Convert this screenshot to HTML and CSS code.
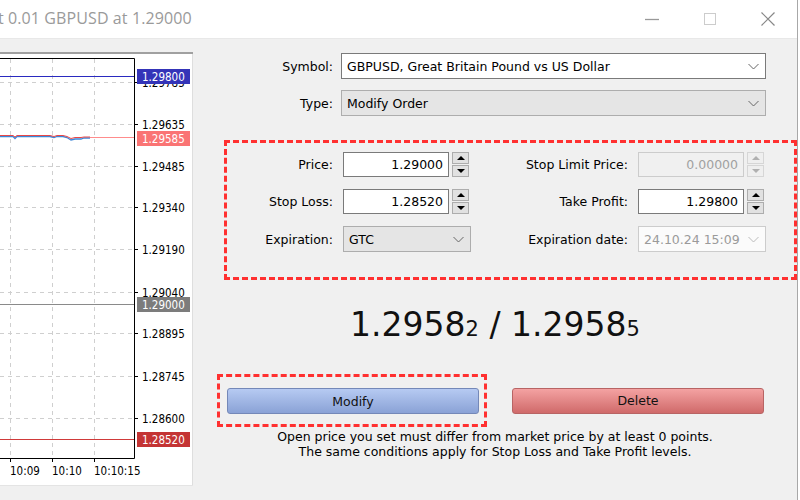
FILE: index.html
```html
<!DOCTYPE html>
<html lang="en">
<head>
    <meta charset="UTF-8">
    <title>Modify order</title>
    <link rel="stylesheet" href="styles.css">
</head>
<body>

<div class="window">
    <div class="titlebar">
        <span class="title">t 0.01 GBPUSD at 1.29000</span>
        <div class="win-btn">
            <svg width="16" height="16" viewBox="0 0 16 16"><line x1="1" y1="8.5" x2="15" y2="8.5" stroke="#999" stroke-width="1.3"/></svg>
        </div>
        <div class="win-btn">
            <svg width="16" height="16" viewBox="0 0 16 16"><rect x="2.5" y="2.5" width="11" height="11" fill="none" stroke="#ccc"/></svg>
        </div>
        <div class="win-btn">
            <svg width="16" height="16" viewBox="0 0 16 16"><path d="M1.5 1.5 L14.5 14.5 M14.5 1.5 L1.5 14.5" stroke="#888" stroke-width="1.2"/></svg>
        </div>
    </div>

    <div class="main">
        <!-- small chart on the left, drawn in page coordinates -->
        <div class="chart">
            <svg width="193" height="434" viewBox="0 52 193 434">
                <rect x="0" y="52" width="193" height="434" fill="#fff"/>
                <rect x="0" y="52" width="193" height="2" fill="#a0a0a0"/>
                <line x1="192.5" y1="54" x2="192.5" y2="486" stroke="#dedede"/>
                <line x1="0" y1="485.5" x2="193" y2="485.5" stroke="#e4e4e4"/>

                <g stroke="#cfcfcf" stroke-dasharray="4 4">
                    <line x1="0" y1="82.5" x2="134" y2="82.5"/>
                    <line x1="0" y1="124.5" x2="134" y2="124.5"/>
                    <line x1="0" y1="166.5" x2="134" y2="166.5"/>
                    <line x1="0" y1="207.5" x2="134" y2="207.5"/>
                    <line x1="0" y1="249.5" x2="134" y2="249.5"/>
                    <line x1="0" y1="292.5" x2="134" y2="292.5"/>
                    <line x1="0" y1="333.5" x2="134" y2="333.5"/>
                    <line x1="0" y1="376.5" x2="134" y2="376.5"/>
                    <line x1="0" y1="418.5" x2="134" y2="418.5"/>
                    <line x1="10.5" y1="59" x2="10.5" y2="458"/>
                    <line x1="52.5" y1="59" x2="52.5" y2="458"/>
                    <line x1="94.5" y1="59" x2="94.5" y2="458"/>
                </g>

                <path d="M0 58.5 H134.5 V458.5 H0" fill="none" stroke="#000"/>
                <g stroke="#000">
                    <line x1="134" y1="82.5" x2="138" y2="82.5"/>
                    <line x1="134" y1="124.5" x2="138" y2="124.5"/>
                    <line x1="134" y1="166.5" x2="138" y2="166.5"/>
                    <line x1="134" y1="207.5" x2="138" y2="207.5"/>
                    <line x1="134" y1="249.5" x2="138" y2="249.5"/>
                    <line x1="134" y1="292.5" x2="138" y2="292.5"/>
                    <line x1="134" y1="333.5" x2="138" y2="333.5"/>
                    <line x1="134" y1="376.5" x2="138" y2="376.5"/>
                    <line x1="134" y1="418.5" x2="138" y2="418.5"/>
                    <line x1="10.5" y1="458" x2="10.5" y2="462"/>
                    <line x1="52.5" y1="458" x2="52.5" y2="462"/>
                    <line x1="94.5" y1="458" x2="94.5" y2="462"/>
                </g>

                <g class="axis">
                    <text x="142" y="87">1.29785</text>
                    <text x="142" y="129">1.29635</text>
                    <text x="142" y="171">1.29485</text>
                    <text x="142" y="212">1.29340</text>
                    <text x="142" y="254">1.29190</text>
                    <text x="142" y="297">1.29040</text>
                    <text x="142" y="338">1.28895</text>
                    <text x="142" y="381">1.28745</text>
                    <text x="142" y="423">1.28600</text>
                    <text x="10" y="475">10:09</text>
                    <text x="52" y="475">10:10</text>
                    <text x="94" y="475">10:10:15</text>
                </g>

                <!-- take profit -->
                <line x1="0" y1="76.5" x2="134" y2="76.5" stroke="#2a2ac0"/>
                <rect x="137" y="69" width="53" height="15" fill="#3434b8"/>
                <!-- current price -->
                <line x1="90" y1="137.5" x2="134" y2="137.5" stroke="#ff8c8c"/>
                <polyline points="0,136.5 13,136.5 15,138.5 17,136.5 50,136.5 54,137.5 57,136.5 63,136.5 67,137.5 71,140 75,139 81,139 84,138 90,138" fill="none" stroke="#3c86d8" stroke-width="1.3"/>
                <polyline points="0,135.5 13,135.5 15,137 17,135.5 50,135.5 54,136.5 57,135.5 63,135.5 67,136.5 71,138.5 75,137.5 81,137.5 84,137 90,137" fill="none" stroke="#e84848" stroke-width="1"/>
                <rect x="137" y="131" width="53" height="15" fill="#fa7474"/>
                <!-- order price -->
                <line x1="0" y1="304.5" x2="134" y2="304.5" stroke="#8a8a8a"/>
                <rect x="137" y="297" width="53" height="15" fill="#7c7c7c"/>
                <!-- stop loss -->
                <line x1="0" y1="439.5" x2="134" y2="439.5" stroke="#d03a3a"/>
                <rect x="137" y="432" width="53" height="15" fill="#c43434"/>

                <g class="axis tag">
                    <text x="142" y="81">1.29800</text>
                    <text x="142" y="143">1.29585</text>
                    <text x="142" y="309">1.29000</text>
                    <text x="142" y="444">1.28520</text>
                </g>
            </svg>
        </div>

        <div class="dialog">
            <div class="row">
                <label>Symbol:</label>
                <div class="select white">
                    <span>GBPUSD, Great Britain Pound vs US Dollar</span>
                    <svg class="chev" width="11" height="7" viewBox="0 0 11 7"><polyline points="0.5,1 5.5,6 10.5,1" fill="none" stroke="#666"/></svg>
                </div>
            </div>
            <div class="row">
                <label>Type:</label>
                <div class="select">
                    <span>Modify Order</span>
                    <svg class="chev" width="11" height="7" viewBox="0 0 11 7"><polyline points="0.5,1 5.5,6 10.5,1" fill="none" stroke="#666"/></svg>
                </div>
            </div>

            <div class="params">
                <label>Price:</label>
                <div class="num">
                    <input type="text" value="1.29000">
                    <div class="spin"><span class="up"></span><span class="down"></span></div>
                </div>
                <label>Stop Limit Price:</label>
                <div class="num off">
                    <input type="text" value="0.00000" disabled>
                    <div class="spin"><span class="up"></span><span class="down"></span></div>
                </div>

                <label>Stop Loss:</label>
                <div class="num">
                    <input type="text" value="1.28520">
                    <div class="spin"><span class="up"></span><span class="down"></span></div>
                </div>
                <label>Take Profit:</label>
                <div class="num">
                    <input type="text" value="1.29800">
                    <div class="spin"><span class="up"></span><span class="down"></span></div>
                </div>

                <label>Expiration:</label>
                <div class="select">
                    <span>GTC</span>
                    <svg class="chev" width="11" height="7" viewBox="0 0 11 7"><polyline points="0.5,1 5.5,6 10.5,1" fill="none" stroke="#666"/></svg>
                </div>
                <label>Expiration date:</label>
                <div class="select disabled">
                    <span>24.10.24 15:09</span>
                    <svg class="chev" width="11" height="7" viewBox="0 0 11 7"><polyline points="0.5,1 5.5,6 10.5,1" fill="none" stroke="#bbb"/></svg>
                </div>
            </div>

            <div class="quote">1.2958<small>2</small> / 1.2958<small>5</small></div>

            <div class="buttons">
                <div class="mark">
                    <button class="btn modify">Modify</button>
                </div>
                <button class="btn delete">Delete</button>
            </div>

            <p class="note">
                Open price you set must differ from market price by at least 0 points.<br>
                The same conditions apply for Stop Loss and Take Profit levels.
            </p>
        </div>
    </div>
</div>

</body>
</html>
```

FILE: styles.css
```css
body {
    margin: 0;
    background-color: #ffffff;
    font-family: "DejaVu Sans", Verdana, sans-serif;
    font-size: 12.5px;
    color: #000;
}

.window {
    width: 797px;
    height: 500px;
    border-right: 1px solid #a8a8a8;
    background-color: #f0f0f0;
    overflow: hidden;
}

.titlebar {
    height: 38px;
    background-color: #ffffff;
    border-bottom: 1px solid #e8e8e8;
    display: flex;
    align-items: center;
}

.title {
    flex: 1;
    margin-left: -2px;
    margin-top: -2px;
    font-family: "Open Sans", "Noto Sans", sans-serif;
    font-size: 16px;
    letter-spacing: 0.1px;
    color: #9a9a9a;
}

.win-btn {
    width: 58px;
    display: flex;
    justify-content: center;
    align-items: center;
}

.main {
    display: flex;
    height: 461px;
}

.chart {
    width: 193px;
    margin-top: 13px;
}

.chart svg {
    display: block;
}

.axis {
    font-family: "DejaVu Sans Condensed", "DejaVu Sans", sans-serif;
    font-size: 11.5px;
    fill: #000;
}

.axis.tag {
    fill: #ffffff;
}

.dialog {
    flex: 1;
    padding-top: 14px;
}

.row {
    display: flex;
    align-items: center;
    height: 26px;
    margin-bottom: 11px;
}

.row label {
    width: 148px;
    padding-right: 8px;
    text-align: right;
    box-sizing: border-box;
}

.row .select {
    width: 425px;
}

.select {
    height: 26px;
    box-sizing: border-box;
    display: flex;
    align-items: center;
    justify-content: space-between;
    padding: 0 6px 0 5px;
    background-color: #e5e5e5;
    border: 1px solid #adadad;
}

.select.white {
    background-color: #ffffff;
    border-color: #7a7a7a;
}

.select.disabled {
    background-color: #fbfbfb;
    border-color: #cccccc;
    color: #9a9a9a;
}

.params {
    margin: 24px 0 0 31px;
    width: 573px;
    height: 140px;
    box-sizing: border-box;
    border: 3px dashed #ff3030;
    padding-top: 9px;
    display: grid;
    grid-template-columns: 106px 128px 147px 128px;
    grid-template-rows: 25px 25px 26px;
    column-gap: 10px;
    row-gap: 12px;
    align-items: center;
}

.params label {
    text-align: right;
}

.num {
    display: flex;
    height: 25px;
}

.num input {
    width: 106px;
    height: 25px;
    box-sizing: border-box;
    border: 1px solid #7a7a7a;
    background-color: #ffffff;
    font-family: inherit;
    font-size: 12.5px;
    color: #000;
    text-align: right;
    padding: 0 5px;
    margin: 0;
}

.num.off input {
    background-color: #f0f0f0;
    border-color: #cccccc;
    color: #a0a0a0;
}

.spin {
    width: 17px;
    margin-left: 3px;
    display: flex;
    flex-direction: column;
    gap: 1px;
}

.spin span {
    flex: 1;
    border: 1px solid #adadad;
    background-color: #e1e1e1;
    display: flex;
    align-items: center;
    justify-content: center;
}

.spin .up::after {
    content: "";
    border-left: 4px solid transparent;
    border-right: 4px solid transparent;
    border-bottom: 4px solid #000;
}

.spin .down::after {
    content: "";
    border-left: 4px solid transparent;
    border-right: 4px solid transparent;
    border-top: 4px solid #000;
}

.num.off .spin span {
    border-color: #d6d6d6;
    background-color: #efefef;
}

.num.off .spin span::after {
    border-top-color: #b0b0b0;
    border-bottom-color: #b0b0b0;
}

.quote {
    margin-top: 25px;
    text-align: center;
    font-size: 33px;
    line-height: 40px;
    color: #111;
}

.quote small {
    font-size: 21px;
}

.buttons {
    margin: 25px 0 0 24px;
    display: flex;
    align-items: center;
}

.mark {
    border: 3px dashed #ff3030;
    padding: 11px 5px 10px 7px;
}

.btn {
    display: block;
    width: 252px;
    height: 26px;
    border-radius: 3px;
    font-family: inherit;
    font-size: 12.5px;
    color: #111;
    cursor: pointer;
}

.btn.modify {
    background: linear-gradient(#b6caf2, #8aa2d6);
    border: 1px solid #7488b8;
}

.btn.delete {
    margin-left: 25px;
    background: linear-gradient(#f4a2a2, #d06a6a);
    border: 1px solid #b86464;
}

.note {
    margin: 2px 0 0 0;
    text-align: center;
    line-height: 15px;
}
```
